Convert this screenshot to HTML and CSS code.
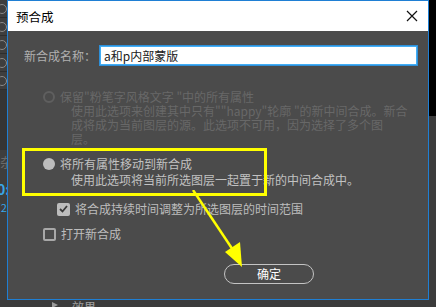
FILE: index.html
```html
<!DOCTYPE html>
<html lang="zh-CN">
<head>
    <meta charset="UTF-8">
    <title>预合成</title>
    <link rel="stylesheet" href="styles.css">
</head>
<body>
    <div class="app">
        <!-- background panel that shows around the dialog -->
        <div class="side-left">
            <div class="layer-row"><span class="watch"></span></div>
            <div class="layer-row"><span class="watch"></span></div>
            <div class="layer-row"><span class="watch"></span></div>
            <div class="layer-row"><span class="watch"></span></div>
            <div class="layer-row"><span class="watch"></span></div>
            <div class="side-gap"></div>
            <div class="side-text">杂</div>
            <div class="side-blue">0:</div>
            <div class="side-blue small">(2</div>
        </div>
        <div class="side-right">
            <div class="right-black"></div>
        </div>
        <div class="bottom-strip">
            <span class="tri"></span>
            <span class="bottom-text">效果</span>
        </div>

        <!-- dialog window -->
        <div class="dialog">
            <div class="title-bar">
                <span class="title">预合成</span>
                <svg class="close" width="12" height="12" viewBox="0 0 12 12">
                    <path d="M1 1 L11 11 M11 1 L1 11" stroke="#111" stroke-width="1.2"/>
                </svg>
            </div>
            <div class="dialog-body">
                <div class="name-row">
                    <label class="name-label" for="compName">新合成名称：</label>
                    <input class="name-input" id="compName" type="text" value="a和p内部蒙版">
                </div>

                <div class="option disabled">
                    <div class="option-head">
                        <span class="radio"></span>
                        <span>保留"粉笔字风格文字 "中的所有属性</span>
                    </div>
                    <div class="option-desc">
                        <div>使用此选项来创建其中只有""happy"轮廓 "的新中间合成。新合</div>
                        <div>成将成为当前图层的源。此选项不可用，因为选择了多个图</div>
                        <div>层。</div>
                    </div>
                </div>

                <div class="option second">
                    <div class="option-head">
                        <span class="radio checked"></span>
                        <span>将所有属性移动到新合成</span>
                    </div>
                    <div class="option-desc">
                        <div>使用此选项将当前所选图层一起置于新的中间合成中。</div>
                    </div>
                </div>

                <div class="check-row indent">
                    <span class="checkbox checked">
                        <svg width="9" height="8" viewBox="0 0 9 8"><path d="M1 4 L3.5 6.5 L8 1" stroke="#3a3a3a" stroke-width="1.8" fill="none"/></svg>
                    </span>
                    <span>将合成持续时间调整为所选图层的时间范围</span>
                </div>

                <div class="check-row">
                    <span class="checkbox"></span>
                    <span>打开新合成</span>
                </div>

                <div class="button-row">
                    <button class="btn-ok" type="button">确定</button>
                </div>
            </div>

            <!-- yellow annotation -->
            <div class="highlight"></div>
            <svg class="arrow" width="80" height="90" viewBox="0 0 80 90">
                <path d="M8 0 L48 60" stroke="#ffff00" stroke-width="2.5"/>
                <path d="M40 62 L55 52 L57 77 Z" fill="#ffff00"/>
            </svg>
        </div>
    </div>
</body>
</html>
```

FILE: styles.css
```css
* {
    box-sizing: border-box;
}
body {
    margin: 0;
    background: #3a3a3a;
    font-family: "Noto Sans CJK SC", "Microsoft YaHei", sans-serif;
    font-size: 12px;
}
.app {
    position: relative;
    width: 436px;
    height: 307px;
    overflow: hidden;
    background: #3c3c3c;
}
.side-left {
    width: 7px;
    height: 300px;
    display: flex;
    flex-direction: column;
    background: #3e3e3e;
    overflow: hidden;
}
.layer-row {
    height: 18px;
    flex-shrink: 0;
    border-bottom: 1px solid #2e2e2e;
    display: flex;
    align-items: center;
}
.watch {
    width: 10px;
    height: 10px;
    margin-left: -3px;
    flex-shrink: 0;
    border: 1.5px solid #8a8a8a;
    border-radius: 50%;
}
.side-gap {
    height: 60px;
    flex-shrink: 0;
    background: #353535;
}
.side-text {
    color: #6a6a6a;
    font-size: 13px;
    margin-top: 2px;
}
.side-blue {
    color: #3aa7e8;
    font-weight: bold;
    font-size: 14px;
    margin-top: 8px;
    margin-left: -3px;
}
.side-blue.small {
    font-size: 11px;
    font-weight: normal;
    margin-top: 0;
}
.side-right {
    position: absolute;
    right: 0;
    top: 0;
    width: 7px;
    height: 300px;
    background: #3c3c3c;
}
.right-black {
    height: 116px;
    background: #000;
}
.bottom-strip {
    position: absolute;
    left: 0;
    bottom: 0;
    width: 436px;
    height: 7px;
    background: #3b3b3b;
    overflow: hidden;
}
.tri {
    position: absolute;
    left: 52px;
    top: 2px;
    width: 0;
    height: 0;
    border-left: 6px solid #9a9a9a;
    border-top: 3px solid transparent;
    border-bottom: 3px solid transparent;
}
.bottom-text {
    position: absolute;
    left: 72px;
    top: -2px;
    color: #a0a0a0;
    font-size: 12px;
}

.dialog {
    position: absolute;
    left: 7px;
    top: 0;
    width: 422px;
    height: 300px;
    border: 1px solid #1f7fd4;
    background: #4b4b4b;
    display: flex;
    flex-direction: column;
}
.title-bar {
    height: 30px;
    background: #fff;
    display: flex;
    align-items: center;
    justify-content: space-between;
    padding: 0 10px 0 8px;
}
.title {
    color: #000;
    font-size: 12.5px;
}
.dialog-body {
    flex: 1;
    padding: 15px 0 0 16px;
    color: #bdbdbd;
    line-height: 14px;
}
.name-row {
    display: flex;
    align-items: center;
    gap: 4px;
}
.name-label {
    color: #b0b0b0;
}
.name-input {
    width: 317px;
    height: 19px;
    border: 1px solid #43aef5;
    box-shadow: 0 0 0 1px #2e8fd8;
    padding: 0 3px;
    font-family: inherit;
    font-size: 12px;
    color: #202020;
    outline: none;
}
.option {
    margin-left: 19px;
}
.option.disabled {
    margin-top: 25px;
    color: #686868;
}
.option.second {
    margin-top: 11px;
    color: #c2c2c2;
}
.option-head {
    display: flex;
    align-items: center;
    gap: 5px;
}
.radio {
    width: 12px;
    height: 12px;
    border: 2px solid #5f5f5f;
    border-radius: 50%;
}
.radio.checked {
    border: none;
    background: #bdbdbd;
}
.option-desc {
    margin-left: 28px;
    white-space: nowrap;
}
.option.second .option-desc {
    margin-top: 2px;
}
.check-row {
    display: flex;
    align-items: center;
    gap: 5px;
    margin-left: 19px;
    margin-top: 11px;
    color: #bdbdbd;
}
.check-row.indent {
    margin-left: 33px;
    margin-top: 15px;
}
.checkbox {
    width: 13px;
    height: 13px;
    border: 2px solid #a8a8a8;
    border-radius: 2px;
    display: flex;
    align-items: center;
    justify-content: center;
}
.checkbox.checked {
    border: none;
    background: #bdbdbd;
}
.button-row {
    margin-top: 23px;
    padding-left: 200px;
}
.btn-ok {
    width: 90px;
    height: 20px;
    border: 1.5px solid #c4c4c4;
    border-radius: 10px;
    background: transparent;
    color: #fff;
    font-family: inherit;
    font-size: 12px;
    line-height: 14px;
    padding: 0;
}

.highlight {
    position: absolute;
    left: 14px;
    top: 147px;
    width: 245px;
    height: 48px;
    border: 3px solid #ffff00;
    pointer-events: none;
}
.arrow {
    position: absolute;
    left: 177px;
    top: 189px;
    pointer-events: none;
}
```
